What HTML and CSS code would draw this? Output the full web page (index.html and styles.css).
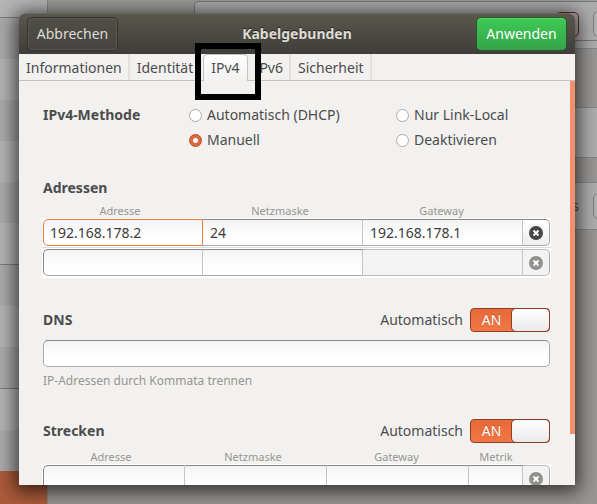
FILE: index.html
```html
<!DOCTYPE html>
<html lang="de">
<head>
<meta charset="utf-8">
<title>Kabelgebunden</title>
<link rel="stylesheet" href="styles.css">
</head>
<body>
<div class="backdrop" aria-hidden="true">
  <div class="side"><i class="row short"></i><i class="row"></i><i class="row"></i><i class="row"></i><i class="row"></i><i class="row"></i><i class="row end"></i><i class="row"></i><i class="row"></i><i class="row end"></i><i class="row"></i><i class="row"></i><i class="row selected"></i></div>
  <div class="main">
    <div class="bar"><i class="search"></i><i class="danger"></i><i class="ghost"></i></div>
    <div class="g1"></div>
    <div class="card c1"></div>
    <div class="g2"></div>
    <div class="card c2"><span>s</span><i class="ghost"></i></div>
  </div>
</div>
<form class="dialog">
  <header class="head">
    <button type="button" class="btn cancel">Abbrechen</button>
    <h1>Kabelgebunden</h1>
    <button type="button" class="btn apply">Anwenden</button>
  </header>
  <nav class="tabs">
    <button type="button">Informationen</button>
    <button type="button">Identität</button>
    <div class="marked"><button type="button" class="active">IPv4</button></div>
    <button type="button">IPv6</button>
    <button type="button">Sicherheit</button>
  </nav>
  <div class="content">
    <section class="method">
      <h2>IPv4-Methode</h2>
      <label><input type="radio" name="method">Automatisch (DHCP)</label>
      <label><input type="radio" name="method">Nur Link-Local</label>
      <label><input type="radio" name="method" checked>Manuell</label>
      <label><input type="radio" name="method">Deaktivieren</label>
    </section>
    <section class="addresses">
      <h2>Adressen</h2>
      <div class="cols labels"><label for="a1">Adresse</label><label for="n1">Netzmaske</label><label for="g1">Gateway</label></div>
      <div class="cols entry">
        <input id="a1" class="focus" value="192.168.178.2"><input id="n1" value="24"><input id="g1" value="192.168.178.1">
        <button type="button" aria-label="Löschen"><svg viewBox="0 0 14 14"><circle cx="7" cy="7" r="7"/><path d="M4.5 4.5l5 5m0-5l-5 5"/></svg></button>
      </div>
      <div class="cols entry">
        <input aria-label="Adresse"><input aria-label="Netzmaske"><input aria-label="Gateway" disabled>
        <button type="button" aria-label="Löschen" disabled><svg viewBox="0 0 14 14"><circle cx="7" cy="7" r="7"/><path d="M4.5 4.5l5 5m0-5l-5 5"/></svg></button>
      </div>
    </section>
    <section class="dns">
      <div class="title"><h2>DNS</h2><span>Automatisch</span><button type="button" class="switch" role="switch" aria-checked="true" aria-label="DNS automatisch"><span>AN</span><i></i></button></div>
      <input class="field" aria-label="DNS">
      <p>IP-Adressen durch Kommata trennen</p>
    </section>
    <section class="routes">
      <div class="title"><h2>Strecken</h2><span>Automatisch</span><button type="button" class="switch" role="switch" aria-checked="true" aria-label="Strecken automatisch"><span>AN</span><i></i></button></div>
      <div class="cols four labels"><label for="ra">Adresse</label><label for="rn">Netzmaske</label><label for="rg">Gateway</label><label for="rm">Metrik</label></div>
      <div class="cols four entry">
        <input id="ra"><input id="rn"><input id="rg"><input id="rm">
        <button type="button" aria-label="Löschen" disabled><svg viewBox="0 0 14 14"><circle cx="7" cy="7" r="7"/><path d="M4.5 4.5l5 5m0-5l-5 5"/></svg></button>
      </div>
    </section>
    <i class="scroll"></i>
  </div>
</form>
</body>
</html>
```
FILE: styles.css
```css
* { box-sizing: border-box; }
html, body { height: 100%; }
body { margin: 0; overflow: hidden; display: flex; padding: 13px 22px 19px 19px; font: 14px/20px "Noto Sans", sans-serif; color: #4c4c4c; background: #989694; }
button, input { font: inherit; color: inherit; margin: 0; }
h1, h2, p { margin: 0; font-size: inherit; }
i { display: block; }

/* Window behind the dialog */
.backdrop { position: absolute; inset: 0; display: flex; overflow: hidden; }
.side { width: 48px; flex: none; display: flex; flex-direction: column; background: #adadad; border-right: 1px solid #858585; }
.row { flex: none; height: 41px; background: #b4b4b4; }
.row:nth-child(even) { background: #aaa; }
.row.short { height: 18px; border-bottom: 1px solid #7c7c7c; }
.row.end { height: 42px; border-bottom: 1px solid #7c7c7c; }
.row.selected { flex: 1; background: #ac5b3a; }
.main { flex: 1; display: flex; flex-direction: column; }
.bar { height: 49px; flex: none; display: flex; align-items: center; justify-content: flex-end; gap: 14px; border-bottom: 1px solid #858585; background: linear-gradient(#9c9c9a, #acacac); }
.search { align-self: flex-start; flex: 1; height: 40px; margin: 1px -80px 0 146px; border: 1px solid #777; border-radius: 4px 0 0 0; background: #acacac; }
.danger { width: 24px; height: 25px; border: 1px solid #642b20; border-radius: 5px; }
.ghost { width: 24px; height: 26px; border: 1px solid #7c7c7c; border-radius: 5px; background: #b2b2b2; margin-right: -20px; }
.g1 { height: 58px; }
.card { border: solid #858585; border-width: 1px 0; background: #adadad; }
.c1 { height: 51px; }
.g2 { height: 24px; }
.c2 { height: 48px; display: flex; align-items: center; justify-content: flex-end; gap: 14px; }

.dialog { position: relative; flex: 1; min-width: 0; display: flex; flex-direction: column; border-radius: 6px 6px 0 0; background: #f2f1f0; box-shadow: 0 3px 18px 4px rgba(0,0,0,.65); }
.head { height: 41px; flex: none; display: grid; grid-template-columns: 1fr auto 1fr; align-items: center; padding: 0 8px; border-radius: 6px 6px 0 0; color: #dfdbd2; background: linear-gradient(#5a574d, #3e3d39); border-top: 1px solid #6a675c; }
.head h1 { text-shadow: 0 -1px #222; }
.btn { height: 34px; padding: 0; width: 91px; border: 1px solid #33322e; border-radius: 5px; }
.cancel { background: linear-gradient(#504e46, #454440); box-shadow: inset 0 0 0 1px #5b5a52; }
.apply { justify-self: end; color: #fff; background: linear-gradient(#3dca55, #36a349); border-color: #28552d; box-shadow: inset 0 1px #55d76a; }

.tabs { height: 27px; flex: none; display: flex; border-bottom: 1px solid #c4c3c2; }
.tabs button { padding: 1px 6px 0 7px; border: 0; border-right: 2px solid #e2e1e0; background: none; white-space: nowrap; }
.marked { position: relative; display: flex; padding-left: 2px; }
.marked::after { content: ""; position: absolute; inset: -11px -13px -20px -6px; border: 6px solid #000; pointer-events: none; }
.tabs .active { padding: 0 7px; border: 1px solid #c4c3c2; border-bottom: 0; border-radius: 5px 5px 0 0; background: linear-gradient(#fff, #f2f1f0); margin-bottom: -1px; }

.content { position: relative; flex: 1; min-height: 0; overflow: hidden; padding: 24px 25px 0 24px; }
.scroll { position: absolute; top: 0; right: 0; width: 5px; height: 353px; background: #f0906c; }
.method { display: grid; grid-template-columns: 146px 207px 1fr; row-gap: 5px; }
.method h2 { grid-row: span 2; }
.method label { display: flex; align-items: center; gap: 5px; white-space: nowrap; }
input[type=radio] { appearance: none; width: 13px; height: 13px; border: 1px solid #aaa; border-radius: 50%; background: #fff; }
input[type=radio]:checked { border-color: #b64d29; background: radial-gradient(circle, #fff 2px, #e0693d 3px); }
.addresses { margin-top: 28px; }
.cols { display: grid; grid-template-columns: 160px 160px 1fr 27px; }
.four { grid-template-columns: 142px 142px 1fr 54px 27px; }
.labels { height: 20px; padding-top: 4px; margin-left: -3px; font-size: 11px; line-height: 18px; text-align: center; color: #96968f; }
.entry { height: 30px; padding: 1px; margin: 0 -1px; background: #fff; border-bottom: 1px solid #ddd; }
.entry:last-child { border-bottom-color: #fff; }
.entry input, .entry button, .field { min-width: 0; height: 27px; padding: 0 7px; color: #3c3c3c; border: 1px solid #aaa; border-top-color: #888; border-left: 0; border-right-color: #c5c5c5; outline: 0; background: linear-gradient(#f3f3f3, #fff 70%); }
.entry input:first-child { padding-left: 6px; border-left: 1px solid #888; border-radius: 5px 0 0 5px; }
.entry button { padding: 0; display: grid; place-items: center; border-right: 1px solid #aaa; border-radius: 0 5px 5px 0; background: linear-gradient(#fff, #eee); }
.entry input.focus { border: 1px solid #f07746; }
.entry :disabled { background: #f3f3f3; border-top-color: #bbb; border-bottom-color: #bbb; }
svg { width: 14px; height: 14px; }
circle { fill: #464646; }
path { stroke: #fff; stroke-width: 2; }
:disabled circle { fill: #92908c; }
.dns { margin-top: 29px; }
.title { height: 26px; display: flex; align-items: center; gap: 7px; }
.title h2 { flex: 1; }
.switch { width: 80px; height: 24px; padding: 0; display: flex; border: 1px solid #8c3f25; border-radius: 4px; background: linear-gradient(#e76a38, #f17745); color: #fff; line-height: 22px; }
.switch span { flex: 1; text-shadow: 0 -1px #b95028; }
.switch i { width: 39px; height: 24px; margin: -1px; border: 1px solid #8c3f25; border-radius: 5px; background: linear-gradient(#fff, #eae9e8); }
.field { display: block; width: 100%; margin-top: 7px; border: 1px solid #aaa; border-top-color: #888; border-radius: 5px; }
.dns p { margin-top: 4px; font-size: 12px; color: #96968f; }
.routes { margin-top: 27px; }
```
